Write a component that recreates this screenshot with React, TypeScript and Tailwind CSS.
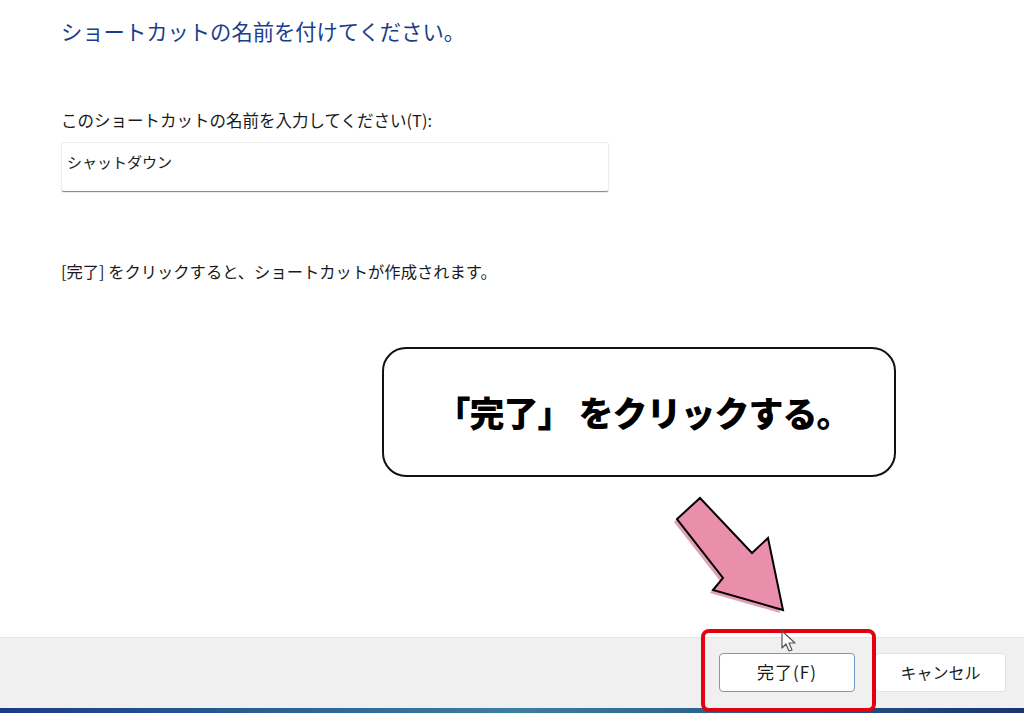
import React from "react"

const jp = { fontFamily: '"Noto Sans CJK JP", "Noto Sans", sans-serif' }

function PinkArrow() {
  // annotation arrow pointing at the finish button
  return (
    <svg className="absolute left-[660px] top-[490px]" width="140" height="130" viewBox="660 490 140 130">
      <polygon
        points="697,501 749,556 765,541 780,613 710,593 720,581 674,522"
        fill="#d98aa3"
        opacity="0.8"
      />
      <polygon
        points="700,498 752,553 768,538 783,610 713,590 723,578 677,519"
        fill="#ea8fab"
        stroke="#000"
        strokeWidth="2"
        strokeLinejoin="miter"
      />
    </svg>
  )
}

function Cursor() {
  return (
    <svg className="absolute left-[781px] top-[630px]" width="20" height="24" viewBox="0 0 20 24">
      <path d="M1 1 L1 18 L5 14 L8 21 L11 20 L8 13 L14 13 Z" fill="#fff" stroke="#555" strokeWidth="1.2" strokeLinejoin="round" />
    </svg>
  )
}

export default function App() {
  return (
    <div className="relative w-full h-[713px] flex flex-col bg-white overflow-hidden" style={jp}>
      {/* ── WIZARD BODY ── */}
      <div className="flex-1 flex flex-col pl-[61px] pt-[16px]">
        <h1 className="text-[21.3px] leading-[30px] text-[#1b3d8d] font-normal">ショートカットの名前を付けてください。</h1>

        <label className="mt-[63px] text-[16.5px] leading-[22px] text-[#1a1a1a]">
          このショートカットの名前を入力してください(T):
        </label>
        <div className="mt-[11px] w-[548px] h-[50px] bg-white border border-[#ececec] border-b-[#8c8c8c] rounded-[3px] pl-[5px] pt-[6px] shadow-[0_1px_1px_rgba(0,0,0,0.08)]">
          <span className="text-[15px] leading-[22px] text-[#1a1a1a]">シャットダウン</span>
        </div>

        <p className="mt-[68px] text-[16.3px] leading-[22px] text-[#1a1a1a]">
          [完了] をクリックすると、ショートカットが作成されます。
        </p>
      </div>

      {/* ── FOOTER ── */}
      <div className="h-[71px] bg-[#f0f0f0] border-t border-[#e6e6e6] flex items-center justify-end gap-[20px] pr-[18px] pb-[2px]">
        <button className="w-[136px] h-[39px] bg-white border border-[#6f9cc6] rounded-[4px] text-[17px] tracking-[1px] text-[#1a1a1a]">
          完了(F)
        </button>
        <button className="w-[131px] h-[39px] bg-white border border-[#e2e2e2] rounded-[4px] text-[16px] text-[#1a1a1a]">
          キャンセル
        </button>
      </div>
      <div className="h-[5px] bg-gradient-to-r from-[#1d3b86] via-[#3a7fa0] to-[#1b356f]" />

      {/* ── ANNOTATIONS ── */}
      <div className="absolute left-[382px] top-[347px] w-[514px] h-[130px] border-2 border-[#111] rounded-[24px] bg-white flex items-center justify-center pl-[8px]">
        <span className="text-[35px] font-black text-black tracking-[-1px]">「完了」 をクリックする。</span>
      </div>
      <PinkArrow />
      <div className="absolute left-[701px] top-[629px] w-[175px] h-[83px] border-[4px] border-[#e3000f] rounded-[8px]" />
      <Cursor />
    </div>
  )
}
